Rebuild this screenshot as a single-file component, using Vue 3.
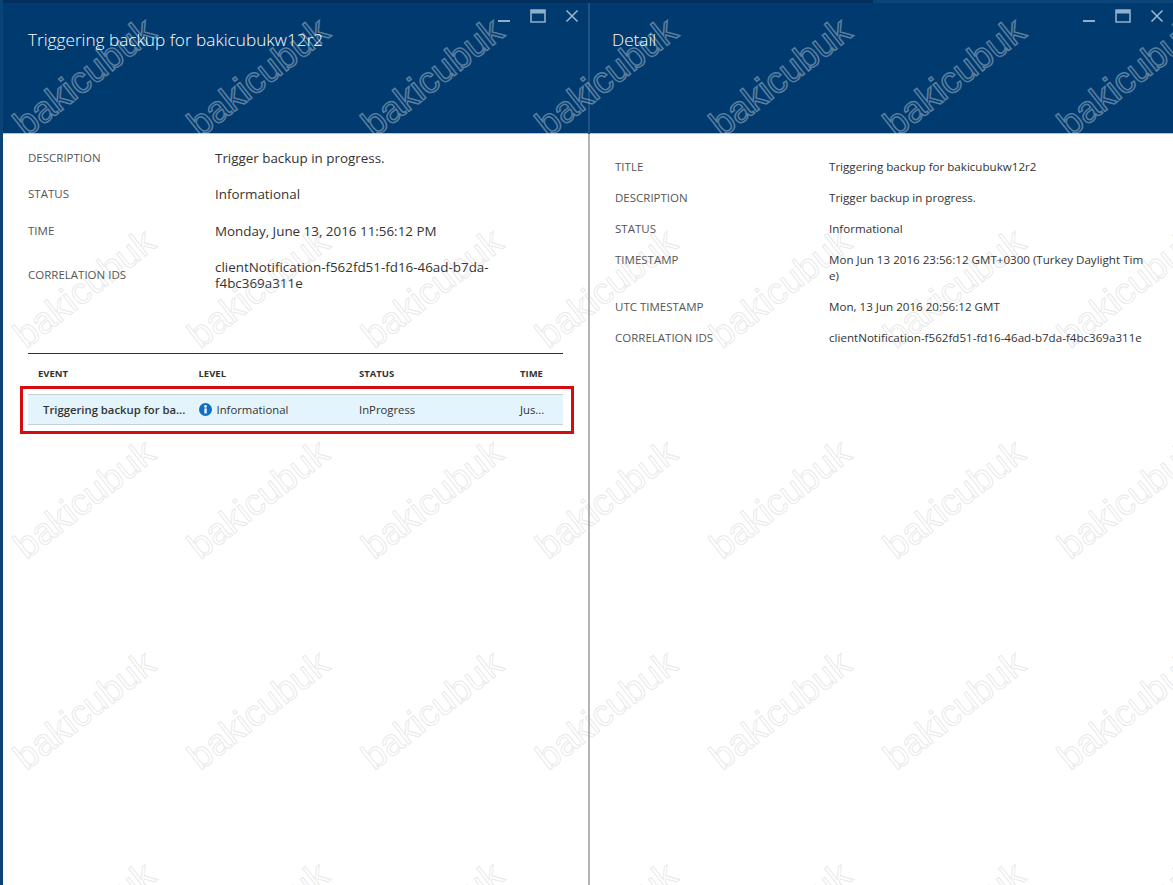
<script setup>
const marks = []
for (let r = 0; r < 5; r++) {
  for (let c = 0; c < 7; c++) {
    marks.push({ id: r + '-' + c, dark: r === 0, left: 30 + c * 174, top: 106 + r * 211 })
  }
}
const leftRows = [
  ['DESCRIPTION', 'Trigger backup in progress.'],
  ['STATUS', 'Informational'],
  ['TIME', 'Monday, June 13, 2016 11:56:12 PM'],
  ['CORRELATION IDS', 'clientNotification-f562fd51-fd16-46ad-b7da-f4bc369a311e']
]
const rightRows = [
  ['TITLE', 'Triggering backup for bakicubukw12r2'],
  ['DESCRIPTION', 'Trigger backup in progress.'],
  ['STATUS', 'Informational'],
  ['TIMESTAMP', 'Mon Jun 13 2016 23:56:12 GMT+0300 (Turkey Daylight Time)'],
  ['UTC TIMESTAMP', 'Mon, 13 Jun 2016 20:56:12 GMT'],
  ['CORRELATION IDS', 'clientNotification-f562fd51-fd16-46ad-b7da-f4bc369a311e']
]
</script>

<template>
  <div class="page">
    <div class="topstrip"><div class="topstrip-end"></div></div>
    <div class="panels">
      <section class="panel left">
        <header class="head">
          <h1 class="title">Triggering backup for bakicubukw12r2</h1>
          <div class="controls">
            <svg width="14" height="14" viewBox="0 0 14 14"><rect x="1" y="11" width="12" height="2" fill="#8fb0cc"/></svg>
            <svg width="16" height="14" viewBox="0 0 16 14"><path d="M1 1h14v12H1z" fill="none" stroke="#8fb0cc" stroke-width="1.6"/><rect x="1" y="1" width="14" height="3.5" fill="#8fb0cc"/></svg>
            <svg width="14" height="14" viewBox="0 0 14 14"><path d="M1.5 1.5l11 11M12.5 1.5l-11 11" stroke="#9dbad2" stroke-width="1.5" fill="none"/></svg>
          </div>
        </header>
        <div class="body left-body">
          <dl class="props">
            <template v-for="row in leftRows" :key="row[0]">
              <dt>{{ row[0] }}</dt>
              <dd>{{ row[1] }}</dd>
            </template>
          </dl>
          <div class="table">
            <div class="tr th">
              <span>EVENT</span><span>LEVEL</span><span>STATUS</span><span>TIME</span>
            </div>
            <div class="selected">
              <div class="tr td">
                <span class="ev">Triggering backup for ba...</span>
                <span class="lvl">
                  <svg width="13" height="13" viewBox="0 0 13 13"><circle cx="6.5" cy="6.5" r="6.5" fill="#0f6fc0"/><rect x="5.4" y="5.4" width="2.3" height="5" fill="#fff"/><circle cx="6.5" cy="3.4" r="1.3" fill="#fff"/></svg>
                  Informational
                </span>
                <span>InProgress</span>
                <span>Jus...</span>
              </div>
            </div>
          </div>
        </div>
      </section>
      <section class="panel right">
        <header class="head">
          <h1 class="title">Detail</h1>
          <div class="controls">
            <svg width="14" height="14" viewBox="0 0 14 14"><rect x="1" y="11" width="12" height="2" fill="#8fb0cc"/></svg>
            <svg width="16" height="14" viewBox="0 0 16 14"><path d="M1 1h14v12H1z" fill="none" stroke="#8fb0cc" stroke-width="1.6"/><rect x="1" y="1" width="14" height="3.5" fill="#8fb0cc"/></svg>
            <svg width="14" height="14" viewBox="0 0 14 14"><path d="M1.5 1.5l11 11M12.5 1.5l-11 11" stroke="#9dbad2" stroke-width="1.5" fill="none"/></svg>
          </div>
        </header>
        <div class="body right-body">
          <dl class="detail">
            <template v-for="row in rightRows" :key="row[0]">
              <dt>{{ row[0] }}</dt>
              <dd>{{ row[1] }}</dd>
            </template>
          </dl>
        </div>
      </section>
    </div>
    <div class="marks">
      <span
        v-for="m in marks"
        :key="m.id"
        class="mark"
        :class="{ dark: m.dark }"
        :style="{ left: m.left + 'px', top: m.top + 'px' }"
      >bakicubuk</span>
    </div>
  </div>
</template>

<style>
html, body { margin: 0; background: #fff; overflow: hidden; }
</style>

<style scoped>
.page {
  position: relative;
  width: 1173px;
  height: 885px;
  overflow: hidden;
  background: #fff;
  font-family: "Open Sans", "Noto Sans", "Liberation Sans", sans-serif;
  color: #3a3a3a;
  border-left: 3px solid #0a4376;
  box-sizing: border-box;
}
.topstrip { height: 3px; background: #032f5c; position: relative; }
.topstrip-end { position: absolute; right: 0; top: 0; width: 300px; height: 3px; background: #0b4578; }
.panels { display: flex; height: 882px; }
.panel { display: flex; flex-direction: column; }
.left { width: 585px; border-right: 2px solid #b4b4b4; }
.right { flex: 1; min-width: 0; }
.head {
  height: 131px;
  background: #003a6e;
  border-bottom: 1px solid #b7c4d2;
  box-sizing: border-box;
  display: flex;
  justify-content: space-between;
  position: relative;
}
.left .head { box-shadow: 2px 0 0 #1f5383; }
.title {
  margin: 0;
  padding: 25px 0 0 25px;
  font-size: 17.2px;
  font-weight: 300;
  line-height: 24px;
  color: #fff;
  white-space: nowrap;
}
.right .title { padding-left: 22px; }
.controls {
  display: flex;
  gap: 19px;
  padding: 6px 9px 0 0;
  align-items: flex-start;
}
.body { flex: 1; }
.props {
  margin: 0;
  padding: 16px 25px 0;
  display: grid;
  grid-template-columns: 187px 1fr;
  grid-auto-rows: min-content;
  row-gap: 20.3px;
  font-size: 13.4px;
  line-height: 16px;
}
.props dt { font-size: 11.5px; color: #555; align-self: center; }
.props dd { margin: 0; color: #333; width: 290px; overflow-wrap: anywhere; }
.table { margin: 62px 25px 0; border-top: 1px solid #333; }
.tr {
  display: grid;
  grid-template-columns: 160.5px 160.5px 161px 1fr;
  padding-left: 10px;
  align-items: center;
}
.th { height: 40px; font-size: 9.5px; font-weight: 700; color: #333; }
.selected {
  position: relative;
  background: #e3f4fc;
  border-top: 1px solid #c6cfd4;
  border-bottom: 1px solid #c6cfd4;
}
.selected::after {
  content: "";
  position: absolute;
  left: -8px;
  right: -11px;
  top: -9px;
  bottom: -10px;
  border: 3px solid #d40c12;
  pointer-events: none;
}
.td { height: 29px; font-size: 11.3px; color: #333; }
.ev { font-weight: 600; padding-left: 5px; white-space: nowrap; }
.lvl { display: flex; align-items: center; gap: 5px; }
.detail {
  margin: 0;
  padding: 25px 0 0 25px;
  display: grid;
  grid-template-columns: 214px 318px;
  grid-auto-rows: min-content;
  row-gap: 15px;
  font-size: 11.6px;
  line-height: 16px;
}
.detail dt { color: #555; font-size: 11.5px; }
.detail dd { margin: 0; color: #333; word-break: break-all; }
.marks { position: absolute; inset: 0 0 0 -3px; pointer-events: none; overflow: hidden; }
.mark {
  position: absolute;
  font-family: "Liberation Sans", sans-serif;
  font-size: 37px;
  line-height: 37px;
  white-space: nowrap;
  color: transparent;
  -webkit-text-stroke: 1.2px rgba(150, 150, 150, .2);
  transform: rotate(-38deg);
  transform-origin: left bottom;
}
.mark.dark { -webkit-text-stroke: 1.5px rgba(255, 255, 255, .36); }
</style>
